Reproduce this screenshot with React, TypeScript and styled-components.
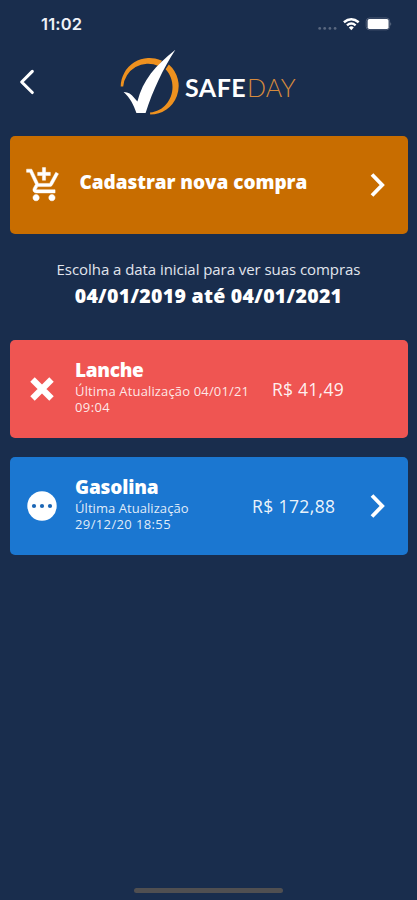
import React from 'react';
import styled, { createGlobalStyle } from 'styled-components';
import { MdOutlineAddShoppingCart } from 'react-icons/md';

const GlobalStyle = createGlobalStyle`
  * { box-sizing: border-box; }
  body { margin: 0; background: #192d4d; }
`;

const Screen = styled.main`
  width: 417px;
  height: 900px;
  display: flex;
  flex-direction: column;
  overflow: hidden;
  background: #192d4d;
  color: #fff;
  font-family: 'Open Sans', 'Noto Sans', sans-serif;
`;

const StatusBar = styled.div`
  height: 48px;
  flex: none;
  display: flex;
  justify-content: space-between;
  padding: 14px 25px 0 41px;
`;

const Clock = styled.span`
  font: 600 16.5px/20px Inter, sans-serif;
  letter-spacing: 0.15px;
  color: #eef1f7;
`;

const StatusIcons = styled.svg`
  width: 76px;
  height: 20px;
  display: block;
`;

const Header = styled.header`
  height: 88px;
  flex: none;
  display: flex;
  align-items: flex-start;
  padding-left: 18px;
`;

const BackIcon = styled.svg`
  width: 20px;
  height: 30px;
  margin: 19px 80px 0 0;
`;

const LogoMark = styled.svg`
  width: 64px;
  height: 72px;
`;

const Brand = styled.div`
  display: flex;
  margin: 24px 0 0 3px;
  font: 700 25px/30px Lato, sans-serif;
`;

const BrandSafe = styled.span`
  width: 62px;
  letter-spacing: 0.5px;
`;

const BrandDay = styled.span`
  font-weight: 300;
  letter-spacing: 0.2px;
  color: #d58a3d;
`;

const Card = styled.section<{ $color: string; $gap?: number }>`
  height: 98px;
  flex: none;
  margin: 0 9px ${(p) => p.$gap ?? 0}px 10px;
  display: flex;
  align-items: center;
  border-radius: 5px;
  background: ${(p) => p.$color};
`;

const IconSlot = styled.div<{ $width: number }>`
  width: ${(p) => p.$width}px;
  flex: none;
  padding-left: 15px;
  display: flex;
`;

const CartIcon = styled(MdOutlineAddShoppingCart)`
  width: 38px;
  height: 38px;

  path {
    stroke: #fff;
    stroke-width: 0.3;
  }

  path[fill='none'] {
    stroke: none;
  }
`;

const Glyph = styled.svg`
  width: 34px;
  height: 34px;
  display: block;
`;

const ActionTitle = styled.span`
  flex: 1;
  margin-top: -6px;
  font-size: 19px;
  line-height: 26px;
  font-weight: 800;
  white-space: nowrap;
  letter-spacing: -0.06px;
`;

const Details = styled.div<{ $width: number }>`
  width: ${(p) => p.$width}px;
  flex: none;
  margin-top: -5px;
`;

const Name = styled.div<{ $spacing: number }>`
  font-size: 19px;
  line-height: 25px;
  font-weight: 800;
  letter-spacing: ${(p) => p.$spacing}px;
`;

const Updated = styled.div<{ $spacing: number }>`
  font-size: 13px;
  line-height: 16.5px;
  white-space: nowrap;
  color: rgba(255, 255, 255, 0.88);
  letter-spacing: ${(p) => p.$spacing}px;
`;

const Stamp = styled.span`
  letter-spacing: 0.38px;
`;

const Amount = styled.span<{ $spacing: number }>`
  flex: 1;
  margin-top: -1px;
  font-size: 17.5px;
  line-height: 24px;
  white-space: nowrap;
  color: rgba(255, 255, 255, 0.93);
  letter-spacing: ${(p) => p.$spacing}px;
`;

const Next = styled.svg`
  width: 20px;
  height: 30px;
  flex: none;
  margin-right: 21px;
`;

const Period = styled.section`
  height: 106px;
  flex: none;
  padding-top: 25px;
  text-align: center;
  white-space: nowrap;
`;

const Hint = styled.div`
  font-size: 15px;
  line-height: 20px;
  color: #e1e5ed;
  letter-spacing: -0.06px;
`;

const Range = styled.div`
  margin-top: 4px;
  font-size: 19.5px;
  line-height: 26px;
  font-weight: 800;
  letter-spacing: 0.28px;
`;

const HomeIndicator = styled.div`
  width: 149px;
  height: 5px;
  flex: none;
  margin: auto auto 7px 134px;
  border-radius: 3px;
  background: #504f51;
`;

const Chevron = () => (
  <Next viewBox="0 0 20 30">
    <path d="M5 4.5 15.2 15 5 25.5" fill="none" stroke="#fff" strokeWidth="3.8" />
  </Next>
);

export default function App() {
  return (
    <>
      <GlobalStyle />
      <Screen>
        <StatusBar>
          <Clock>11:02</Clock>
          <StatusIcons viewBox="316 14 76 20">
            <g fill="#59677f">
              <circle cx="319.7" cy="28.4" r="1.4" />
              <circle cx="324.7" cy="28.4" r="1.4" />
              <circle cx="329.9" cy="28.4" r="1.4" />
              <circle cx="335.1" cy="28.4" r="1.4" />
            </g>
            <g fill="none" stroke="#fff" strokeWidth="2.5">
              <path d="M343.9 22.3Q351.3 16.1 358.7 22.3" />
              <path d="M347 25.4Q351.3 21.7 355.6 25.4" />
            </g>
            <path d="M348.8 27.4Q351.3 25.3 353.8 27.4L351.3 30.3Z" fill="#fff" />
            <rect x="366.2" y="18" width="23.4" height="11.8" rx="3.2" fill="none" stroke="#4f5d77" />
            <rect x="367.6" y="19" width="21" height="10" rx="1.8" fill="#fff" />
            <path d="M390.5 22Q392 24 390.5 26Z" fill="#8590a2" />
          </StatusIcons>
        </StatusBar>

        <Header>
          <BackIcon viewBox="0 0 20 30">
            <path d="M14.3 4.3 3.7 15 14.3 25.5" fill="none" stroke="#fff" strokeWidth="3.1" strokeLinecap="round" strokeLinejoin="round" />
          </BackIcon>
          <LogoMark viewBox="118 48 64 72">
            <path d="M120.7 86.5A28.8 28.8 0 0 1 162 60.8L158.5 66A25 25 0 0 0 123.2 86.5Z" fill="#ee911f" />
            <path d="M168.8 64.4A28.6 28.6 0 0 1 150.2 114.6L150 112.4C170.5 111 180 85 165.6 69.2Z" fill="#ee911f" />
            <path d="M175.4 49.8C163 69 153 90 145.6 113H136.4C133.6 105 130 97.5 123.6 92Q130 91.8 134.3 98L137.4 101.5C143 80 155 66 175.4 49.8Z" fill="#fff" />
          </LogoMark>
          <Brand>
            <BrandSafe>SAFE</BrandSafe>
            <BrandDay>DAY</BrandDay>
          </Brand>
        </Header>

        <Card $color="#c86d00">
          <IconSlot $width={69.5}>
            <CartIcon />
          </IconSlot>
          <ActionTitle>Cadastrar nova compra</ActionTitle>
          <Chevron />
        </Card>

        <Period>
          <Hint>Escolha a data inicial para ver suas compras</Hint>
          <Range>04/01/2019 até 04/01/2021</Range>
        </Period>

        <Card $color="#ef5552" $gap={19}>
          <IconSlot $width={65}>
            <Glyph viewBox="0 0 34 34">
              <path d="M7.5 7.5 26.5 26.5M26.5 7.5 7.5 26.5" stroke="#fff" strokeWidth="6.3" />
            </Glyph>
          </IconSlot>
          <Details $width={197}>
            <Name $spacing={-0.3}>Lanche</Name>
            <Updated $spacing={0.15}>
              Última Atualização 04/01/21
              <br />
              <Stamp>09:04</Stamp>
            </Updated>
          </Details>
          <Amount $spacing={0.25}>R$ 41,49</Amount>
        </Card>

        <Card $color="#1b77d1">
          <IconSlot $width={65}>
            <Glyph viewBox="0 0 34 34">
              <circle cx="17" cy="17" r="14.7" fill="#fff" />
              <g fill="#1b66b5">
                <circle cx="9" cy="17" r="2.1" />
                <circle cx="17" cy="17" r="2.1" />
                <circle cx="25" cy="17" r="2.1" />
              </g>
            </Glyph>
          </IconSlot>
          <Details $width={177}>
            <Name $spacing={-0.15}>Gasolina</Name>
            <Updated $spacing={0.06}>
              Última Atualização
              <br />
              <Stamp>29/12/20 18:55</Stamp>
            </Updated>
          </Details>
          <Amount $spacing={0.4}>R$ 172,88</Amount>
          <Chevron />
        </Card>
        <HomeIndicator />
      </Screen>
    </>
  );
}
